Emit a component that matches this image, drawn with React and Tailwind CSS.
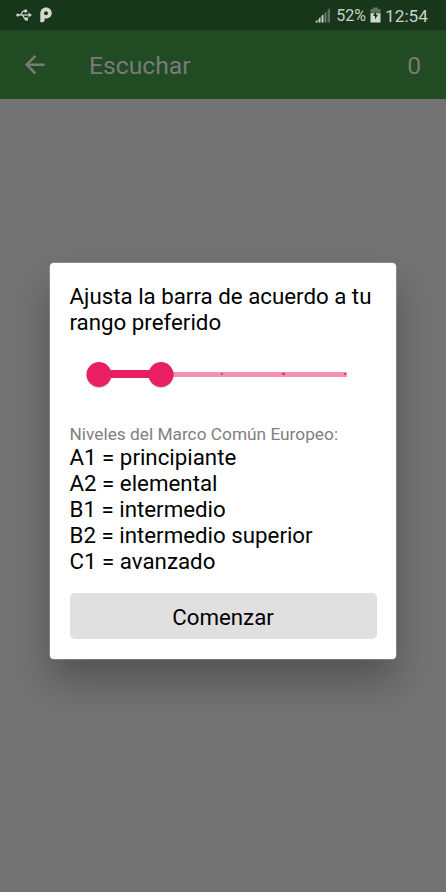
import { useState } from 'react';

const LEVELS = [
  'A1 = principiante',
  'A2 = elemental',
  'B1 = intermedio',
  'B2 = intermedio superior',
  'C1 = avanzado',
];

// position of each level on the bar, in percent
const stepPosition = (step) => `${(step / (LEVELS.length - 1)) * 100}%`;

function UsbIcon() {
  return (
    <svg className="w-4 h-3" viewBox="0 0 16 12" fill="none" stroke="#c9d2c9" strokeWidth="1.3">
      <path d="M2 6H13" />
      <path d="M4.5 6L7 2.2H9" />
      <path d="M6.5 6L9 10H10.5" />
      <circle cx="1.8" cy="6" r="1.6" fill="#c9d2c9" stroke="none" />
      <path d="M12.6 3.6L16 6L12.6 8.4Z" fill="#c9d2c9" stroke="none" />
      <circle cx="9.7" cy="2" r="1.7" fill="#c9d2c9" stroke="none" />
      <path d="M9 8.4H12V11.6H9Z" fill="#c9d2c9" stroke="none" />
    </svg>
  );
}

function ParkingIcon() {
  return (
    <svg className="w-3 h-4" viewBox="0 0 12 16">
      <path
        fill="#d0d8d0"
        fillRule="evenodd"
        d="M0.3 15.3V6.2C0.3 2.7 2.8 0.4 6 0.4S11.8 2.8 11.8 6S9.4 11.5 6 11.5H4.6V13.3C4.6 14.5 3.6 15.3 2.4 15.3ZM6 4.2A2 2 0 1 0 6 8.2A2 2 0 1 0 6 4.2Z"
      />
    </svg>
  );
}

function SignalIcon() {
  return (
    <svg className="w-4 h-4" viewBox="0 0 16 16" fill="#c9d2c9">
      <path d="M0.5 15.5V14.5L2.5 12.8V15.5Z" />
      <path d="M3.5 15.5V11.8L5.5 10V15.5Z" />
      <path d="M6.5 15.5V9L8.5 7.2V15.5Z" />
      <path d="M9.6 15.5V6.2L11.4 4.4V15.5Z" opacity="0.5" />
      <path d="M12.6 15.5V3.2L15 1V15.5Z" opacity="0.38" />
    </svg>
  );
}

function BatteryIcon() {
  return (
    <svg className="w-[11px] h-4" viewBox="0 0 11 16">
      <path d="M3 0.5H8V2H10.5V8H0.5V2H3Z" fill="#5c735d" />
      <path d="M0.5 6.5H10.5V15.5H0.5Z" fill="#d0d8d0" />
      <path d="M6 4.5L3 9H5V12.6L8 7.8H6Z" fill="#17361a" />
    </svg>
  );
}

function StatusBar() {
  return (
    <div className="flex h-[30px] items-center bg-[#17361a] text-[#c9d2c9]">
      <div className="flex items-center pl-4">
        <UsbIcon />
        <div className="ml-2 flex">
          <ParkingIcon />
        </div>
      </div>
      <div className="ml-auto flex items-center pr-[18px]">
        <SignalIcon />
        <span className="ml-[5px] pt-px text-[16px] leading-4">52%</span>
        <div className="ml-1 flex">
          <BatteryIcon />
        </div>
        <span className="ml-1 pt-px text-[17.3px] leading-4">12:54</span>
      </div>
    </div>
  );
}

function AppBar() {
  return (
    <header className="flex h-[69px] items-center bg-[#204b23] pl-[25px] pr-[25px] text-[24.7px] text-[#797b79]">
      <svg className="h-5 w-5" viewBox="0 0 20 20" fill="none" stroke="#797b79" strokeWidth="2.5">
        <path d="M19.6 9.7H2" />
        <path d="M10.4 0.9L1.6 9.7L10.4 18.5" />
      </svg>
      <h1 className="ml-11 pt-0.5 leading-7">Escuchar</h1>
      <span className="ml-auto pt-0.5 leading-7">0</span>
    </header>
  );
}

function RangeBar({ range }) {
  const [from, to] = range;
  return (
    <div className="relative ml-[29.5px] h-[26px] w-[246.6px]">
      {/* track */}
      <div className="absolute top-[10.5px] -right-[1px] left-0 h-[5px] bg-[#f590b2]" />
      <div
        className="absolute top-[9px] h-2 bg-[#e91e63]"
        style={{ left: stepPosition(from), right: `calc(100% - ${stepPosition(to)})` }}
      />
      {LEVELS.map((level, step) => (
        <span
          key={level}
          className="absolute top-[12px] -ml-[1.8px] h-[2.4px] w-[2.4px] rounded-full bg-[#e91e63]"
          style={{ left: stepPosition(step) }}
        />
      ))}
      {range.map((step) => (
        <span
          key={step}
          className="absolute top-[0.5px] h-[25px] w-[25px] -translate-x-1/2 rounded-full bg-[#e91e63] shadow-[0_1px_1px_rgba(0,0,0,0.22)]"
          style={{ left: stepPosition(step) }}
        />
      ))}
    </div>
  );
}

export default function App() {
  const [range] = useState([0, 1]);

  return (
    <div className="relative flex h-screen flex-col overflow-hidden bg-[#737373] font-['Roboto',sans-serif]">
      <StatusBar />
      <AppBar />

      {/* Level dialog */}
      <div className="absolute inset-0 flex justify-center pt-[263px]">
        <div className="flex h-[396px] w-[346px] flex-col rounded-[4px] bg-white pr-[19.5px] pl-[19.5px] pt-5 text-[22.3px] leading-[26px] text-black shadow-[0_0_0_0.5px_rgba(255,255,255,0.4),0_22px_38px_rgba(0,0,0,0.28)]">
          <p>Ajusta la barra de acuerdo a tu rango preferido</p>
          <div className="mt-[26px]">
            <RangeBar range={range} />
          </div>
          <h2 className="mt-[37px] text-[17.3px] leading-[21px] text-[#808080]">
            Niveles del Marco Común Europeo:
          </h2>
          <ul className="-mt-px">
            {LEVELS.map((level) => (
              <li key={level}>{level}</li>
            ))}
          </ul>
          <button className="mt-[19px] h-[46px] w-full rounded-[5px] bg-[#e0e0e0] pt-px">Comenzar</button>
        </div>
      </div>
    </div>
  );
}
